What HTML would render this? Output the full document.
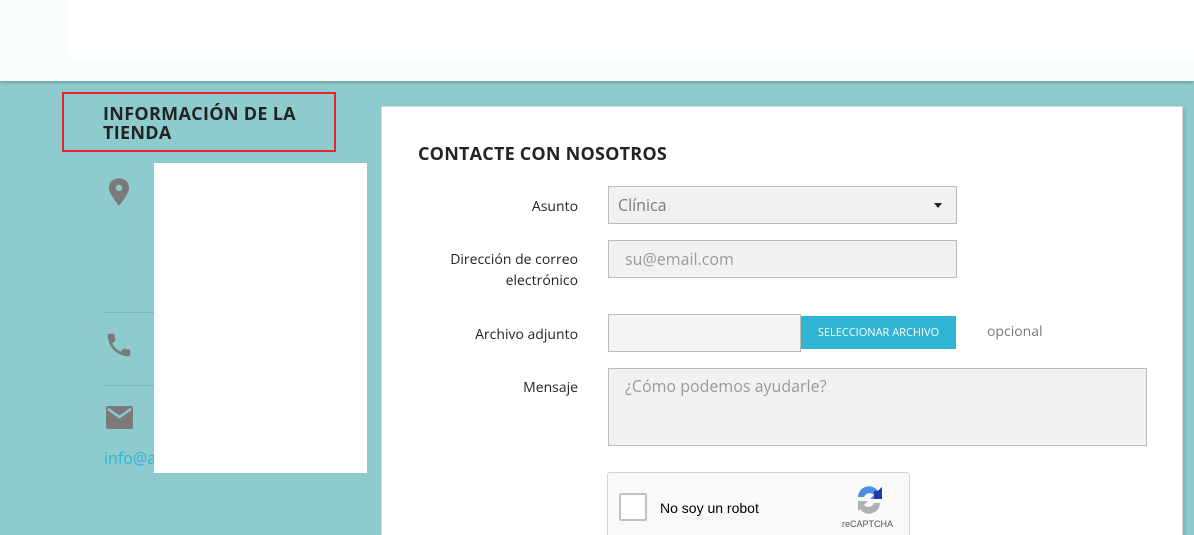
<!DOCTYPE html><html><head><meta charset="utf-8"><style>
*{box-sizing:border-box;margin:0;padding:0}
html{width:1194px;height:535px;overflow:hidden}
body{width:1194px;height:535px;overflow:hidden;background:#8ecbce;font-family:"Open Sans","Liberation Sans",sans-serif;position:relative;color:#232323}
.hdr{position:absolute;left:0;top:0;width:1194px;height:81px;background:#f8fefe;box-shadow:0 2px 3px rgba(0,0,0,.2)}
.hdr2{position:absolute;left:68px;top:0;width:1126px;height:58px;background:#fff}
.a{position:absolute}
.red{left:62px;top:92px;width:274px;height:60px;border:2px solid #e8232b}
.ttl{left:103px;top:105px;font-weight:bold;font-size:18px;line-height:19px;color:#232323;letter-spacing:.3px}
.wb{left:154px;top:163px;width:213px;height:310px;background:#fff}
.hr{left:104px;width:50px;height:1px;background:#7bb6b9}
.card{left:381px;top:106px;width:802px;height:429px;background:#fff;border:1px solid #d9d9d9;border-bottom:0;box-shadow:2px 2px 4px rgba(0,0,0,.15)}
.lbl{font-size:14px;color:#232323;text-align:right;width:160px;left:418px;line-height:21px}
.inp{background:#f1f1f1;border:1px solid #bbb;color:#8a8a8a;font-size:16px;padding-left:14px}
</style></head><body>
<div class="hdr"></div><div class="hdr2"></div>
<div class="a red"></div>
<div class="a ttl">INFORMACIÓN DE LA<br>TIENDA</div>
<svg class="a" style="left:108px;top:178px" width="22" height="28" viewBox="0 0 24 30"><path d="M12 0C5.4 0 1 4.8 1 10.5 1 17 12 30 12 30S23 17 23 10.5C23 4.8 18.6 0 12 0zm0 14a3.5 3.5 0 110-7 3.5 3.5 0 010 7z" fill="#7a7a7a"/></svg>
<div class="a hr" style="top:312px"></div>
<svg class="a" style="left:104px;top:330px" width="30" height="30" viewBox="0 0 24 24"><path d="M6.6 10.8c1.4 2.8 3.8 5.1 6.6 6.6l2.2-2.2c.3-.3.7-.4 1-.2 1.1.4 2.3.6 3.6.6.6 0 1 .4 1 1V20c0 .6-.4 1-1 1C10.6 21 3 13.4 3 4c0-.6.4-1 1-1h3.5c.6 0 1 .4 1 1 0 1.3.2 2.5.6 3.6.1.3 0 .7-.2 1z" fill="#7a7a7a"/></svg>
<div class="a hr" style="top:385px"></div>
<svg class="a" style="left:105px;top:405px" width="29" height="25" viewBox="0 0 29 25"><rect x="1" y="1" width="27" height="23" rx="2" fill="#7a7a7a"/><path d="M3 4l11.5 8L26 4" stroke="#8ecbce" stroke-width="2.5" fill="none"/></svg>
<div class="a" style="left:104px;top:447px;font-size:16px;color:#2fb5d2">info@a</div>
<div class="a wb"></div>
<div class="a card"></div>
<div class="a" style="left:418px;top:142px;font-weight:bold;font-size:18px;letter-spacing:.2px">CONTACTE CON NOSOTROS</div>
<div class="a lbl" style="top:196px">Asunto</div>
<div class="a inp" style="left:608px;top:186px;width:349px;height:38px;line-height:36px;padding-left:9px;color:#7a7a7a">Clínica<span style="position:absolute;right:14px;top:16px;border:4px solid transparent;border-top:5px solid #222;border-bottom:0"></span></div>
<div class="a lbl" style="top:249px">Dirección de correo<br>electrónico</div>
<div class="a inp" style="left:608px;top:240px;width:349px;height:38px;line-height:36px;padding-left:16px;color:#9a9a9a">su@email.com</div>
<div class="a lbl" style="top:324px">Archivo adjunto</div>
<div class="a" style="left:608px;top:314px;width:193px;height:38px;background:#f4f4f4;border:1px solid #bbb"></div>
<div class="a" style="left:801px;top:316px;width:155px;height:33px;background:#2fb5d2;color:#fff;font-size:11px;line-height:33px;text-align:center">SELECCIONAR ARCHIVO</div>
<div class="a" style="left:987px;top:322px;font-size:14px;color:#7a7a7a">opcional</div>
<div class="a lbl" style="top:377px">Mensaje</div>
<div class="a inp" style="left:608px;top:368px;width:539px;height:78px;padding:6px 16px;color:#9a9a9a">¿Cómo podemos ayudarle?</div>
<div class="a" style="left:607px;top:472px;width:303px;height:70px;background:#f9f9f9;border:1px solid #d3d3d3;border-radius:3px"></div>
<div class="a" style="left:619px;top:493px;width:28px;height:28px;background:#fff;border:2px solid #c1c1c1;border-radius:2px"></div>
<div class="a" style="left:660px;top:500px;font-family:'Liberation Sans',sans-serif;font-size:14px;color:#000">No soy un robot</div>
<svg class="a" style="left:852px;top:483px" width="34" height="32" viewBox="0 0 34 32"><path d="M6 14A11 11 0 0 1 26 8l4-4v12H18l4-4a6 6 0 0 0-10 2z" fill="#4a90e2"/><path d="M22 8l4 0 4-4v12H22z" fill="#1c3aa9"/><path d="M6 18h10l-4 4a6 6 0 0 0 10-2h6A11 11 0 0 1 8 26l-2 2z" fill="#b0b0b0"/></svg>
<div class="a" style="left:842px;top:519px;font-family:'Liberation Sans',sans-serif;font-size:9px;color:#555">reCAPTCHA</div>
</body></html>
